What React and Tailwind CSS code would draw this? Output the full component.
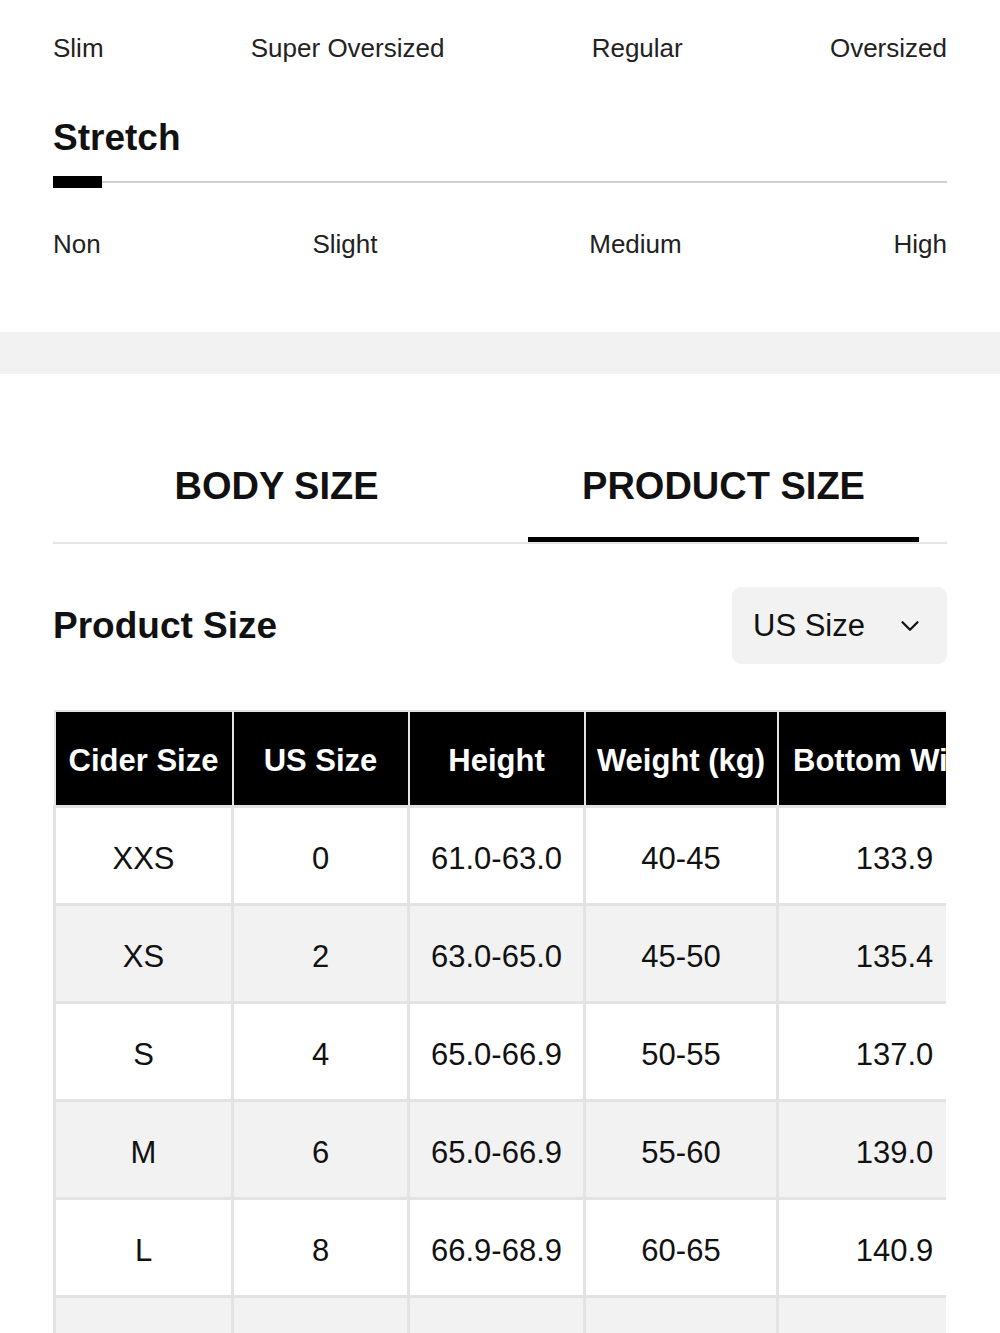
import { ChevronDown } from 'lucide-react';

const fits = ['Slim', 'Super Oversized', 'Regular', 'Oversized'];
const stretch = ['Non', 'Slight', 'Medium', 'High'];

const columns = [
  { label: 'Cider Size', w: 178 },
  { label: 'US Size', w: 176 },
  { label: 'Height', w: 176 },
  { label: 'Weight (kg)', w: 193 },
  { label: 'Bottom Width', w: 234 },
];

const rows = [
  ['XXS', '0', '61.0-63.0', '40-45', '133.9'],
  ['XS', '2', '63.0-65.0', '45-50', '135.4'],
  ['S', '4', '65.0-66.9', '50-55', '137.0'],
  ['M', '6', '65.0-66.9', '55-60', '139.0'],
  ['L', '8', '66.9-68.9', '60-65', '140.9'],
  ['XL', '10', '68.9-70.9', '65-70', '142.9'],
];

export default function App() {
  return (
    <div className="w-[1000px] min-h-[1333px] bg-white text-[#111] font-['Liberation_Sans',Arial,sans-serif] overflow-hidden">
      <div className="px-[53px] pt-[33px] pb-[73px]">
        <div className="flex justify-between text-[26px] leading-[30px] text-[#222]">
          {fits.map(f => <span key={f}>{f}</span>)}
        </div>

        <h2 className="mt-[55px] text-[37px] leading-[40px] font-bold">Stretch</h2>

        <div className="mt-[18px] relative h-[12px] flex items-center">
          <div className="w-full h-[2px] bg-[#cfcfcf]" />
          <div className="absolute left-0 top-0 w-[49px] h-[12px] bg-black" />
        </div>

        <div className="mt-[41px] flex justify-between text-[26px] leading-[30px] text-[#222]">
          {stretch.map(s => <span key={s}>{s}</span>)}
        </div>
      </div>

      <div className="h-[42px] bg-[#f2f2f2]" />

      <div className="px-[53px]">
        <div className="flex border-b-2 border-[#e5e5e5] pt-[90px]">
          <div className="flex-1 flex flex-col items-center">
            <span className="text-[38px] leading-[44px] font-bold">BODY SIZE</span>
            <div className="mt-[29px] h-[5px]" />
          </div>
          <div className="flex-1 flex flex-col items-center">
            <span className="text-[38px] leading-[44px] font-bold">PRODUCT SIZE</span>
            <div className="mt-[29px] h-[5px] w-[391px] bg-black" />
          </div>
        </div>

        <div className="mt-[43px] flex items-center justify-between">
          <h3 className="text-[37px] font-bold leading-[40px]">Product Size</h3>
          <div className="w-[215px] h-[77px] rounded-[9px] bg-[#f2f2f2] flex items-center justify-between pl-[21px] pr-[22px]">
            <span className="text-[31px] leading-[34px]">US Size</span>
            <ChevronDown size={30} strokeWidth={1.8} className="text-[#111]" />
          </div>
        </div>

        <div className="mt-[46px] w-[893px] overflow-hidden">
          <table className="table-fixed border-collapse w-[957px]">
            <colgroup>
              {columns.map(c => <col key={c.label} style={{ width: c.w }} />)}
            </colgroup>
            <thead>
              <tr className="h-[95px]">
                {columns.map(c => (
                  <th key={c.label} className="bg-black text-white text-[31px] font-bold whitespace-nowrap border-2 border-[#e3e3e3] px-[10px] pt-[5px] text-center">
                    {c.label}
                  </th>
                ))}
              </tr>
            </thead>
            <tbody>
              {rows.map((r, i) => (
                <tr key={r[0]} className={`h-[98px] ${i % 2 === 1 ? 'bg-[#f2f2f2]' : 'bg-white'}`}>
                  {r.map((v, j) => (
                    <td key={j} className="text-[31px] text-center pt-[8px] border-[3px] border-[#e3e3e3] whitespace-nowrap">
                      {v}
                    </td>
                  ))}
                </tr>
              ))}
            </tbody>
          </table>
        </div>
      </div>
    </div>
  );
}
